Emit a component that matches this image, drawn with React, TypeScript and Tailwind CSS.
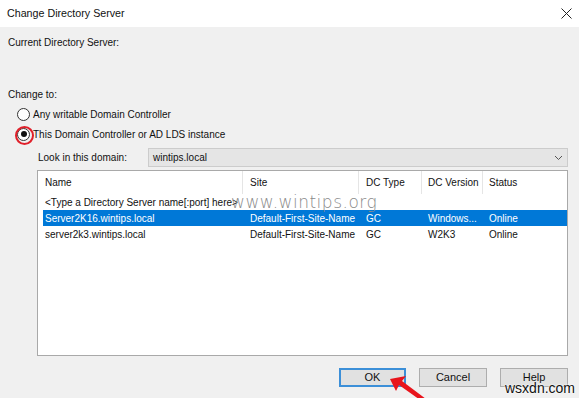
import React from 'react';

const cols = [
  { label: 'Name', w: 'w-[200px] pl-[2px]' },
  { label: 'Site', w: 'w-[116px] pl-[7px]' },
  { label: 'DC Type', w: 'w-[63px] pl-[7px]' },
  { label: 'DC Version', w: 'w-[61px] pl-[6px]' },
  { label: 'Status', w: 'flex-1 pl-[6px]' },
];

const rows = [
  { cells: ['Server2K16.wintips.local', 'Default-First-Site-Name', 'GC', 'Windows...', 'Online'], selected: true },
  { cells: ['server2k3.wintips.local', 'Default-First-Site-Name', 'GC', 'W2K3', 'Online'], selected: false },
];

function Radio({ checked }: { checked?: boolean }) {
  return (
    <span className="relative flex h-[13px] w-[13px] items-center justify-center rounded-full border border-[#333] bg-white">
      {checked && <span className="h-[6px] w-[6px] rounded-full bg-[#111]" />}
      {checked && (
        <span className="absolute -left-[3px] -top-[3px] h-[19px] w-[19px] rounded-full border-[2px] border-[#e0202a]" />
      )}
    </span>
  );
}

export default function App() {
  return (
    <div
      className="relative h-[398px] w-[579px] overflow-hidden bg-[#f0f0f0] text-[10px] text-[#111]"
      style={{ fontFamily: "'Liberation Sans', Arial, sans-serif" }}
    >
      {/* title bar */}
      <div className="flex h-[27px] items-center justify-between bg-white pl-[7px] pr-[6px]">
        <span className="text-[10.7px]">Change Directory Server</span>
        <svg width="11" height="11" viewBox="0 0 11 11" className="mr-[1px]">
          <path d="M0.5 0.5 L10.5 10.5 M10.5 0.5 L0.5 10.5" stroke="#222" strokeWidth="1" />
        </svg>
      </div>

      <div className="pl-[8px] pr-[11px]">
        <div className="mt-[10px] leading-[12px]">Current Directory Server:</div>
        <div className="mt-[40px] leading-[12px]">Change to:</div>

        <div className="mt-[3px] flex h-[20px] items-center gap-[3px] pl-[9px]">
          <Radio />
          <span>Any writable Domain Controller</span>
        </div>
        <div className="flex h-[20px] items-center gap-[3px] pl-[9px]">
          <Radio checked />
          <span>This Domain Controller or AD LDS instance</span>
        </div>

        <div className="ml-[29px]">
          <div className="mt-[4px] flex h-[19px] items-center">
            <span className="w-[111px] pl-[1px]">Look in this domain:</span>
            <div className="flex h-[19px] flex-1 items-center justify-between border border-[#cccccc] bg-[#e5e5e5] pl-[4px] pr-[4px]">
              <span>wintips.local</span>
              <svg width="9" height="6" viewBox="0 0 9 6">
                <path d="M1 1 L4.5 4.5 L8 1" stroke="#555" strokeWidth="1" fill="none" />
              </svg>
            </div>
          </div>

          <div className="relative mt-[3px] h-[186px] border border-[#a9a9a9] bg-white">
            <div className="ml-[5px] flex h-[23px] items-stretch">
              {cols.map((c) => (
                <div
                  key={c.label}
                  className={`${c.w} flex items-center whitespace-nowrap border-r border-[#e5e5e5] last:border-r-0`}
                >
                  {c.label}
                </div>
              ))}
            </div>
            <div className="ml-[5px] flex h-[16px] items-center whitespace-nowrap pl-[2px]">
              &lt;Type a Directory Server name[:port] here&gt;
            </div>
            {rows.map((r, i) => (
              <div
                key={i}
                className={`ml-[5px] flex h-[16px] items-center whitespace-nowrap ${r.selected ? 'bg-[#0078d7] text-white' : ''}`}
              >
                {r.cells.map((cell, j) => (
                  <div key={j} className={`${cols[j].w} overflow-hidden`}>
                    {cell}
                  </div>
                ))}
              </div>
            ))}

            <span
              className="pointer-events-none absolute left-[193px] top-[19px] text-[17px] tracking-[0.5px] text-[#8a8a8a]"
              style={{ fontFamily: "'DejaVu Sans', sans-serif", fontWeight: 300 }}
            >
              www.wintips.org
            </span>
          </div>
        </div>

        <div className="mt-[12px] flex justify-end gap-[13px]">
          <button className="h-[19px] w-[67px] border-[2px] border-[#3c8fd8] bg-[#e1e1e1] text-[11px] leading-none">OK</button>
          <button className="h-[19px] w-[68px] border border-[#adadad] bg-[#e1e1e1] text-[11px] leading-none">Cancel</button>
          <button className="h-[19px] w-[68px] border border-[#adadad] bg-[#e1e1e1] text-[11px] leading-none">Help</button>
        </div>
      </div>

      {/* red arrow overlay */}
      <svg className="absolute left-[385px] top-[372px]" width="50" height="30" viewBox="0 0 50 30">
        <path d="M5 7 L21 4 L17 9 L45 30 L38 30 L14 13 L11 19 Z" fill="#e8141c" />
      </svg>

      <span
        className="absolute left-[505px] top-[380px] text-[14px] leading-[16px] text-[#111]"
        style={{ fontFamily: "'Liberation Sans', Arial, sans-serif", textShadow: '0 0 2px #fff, 0 0 2px #fff' }}
      >
        wsxdn.com
      </span>
    </div>
  );
}
